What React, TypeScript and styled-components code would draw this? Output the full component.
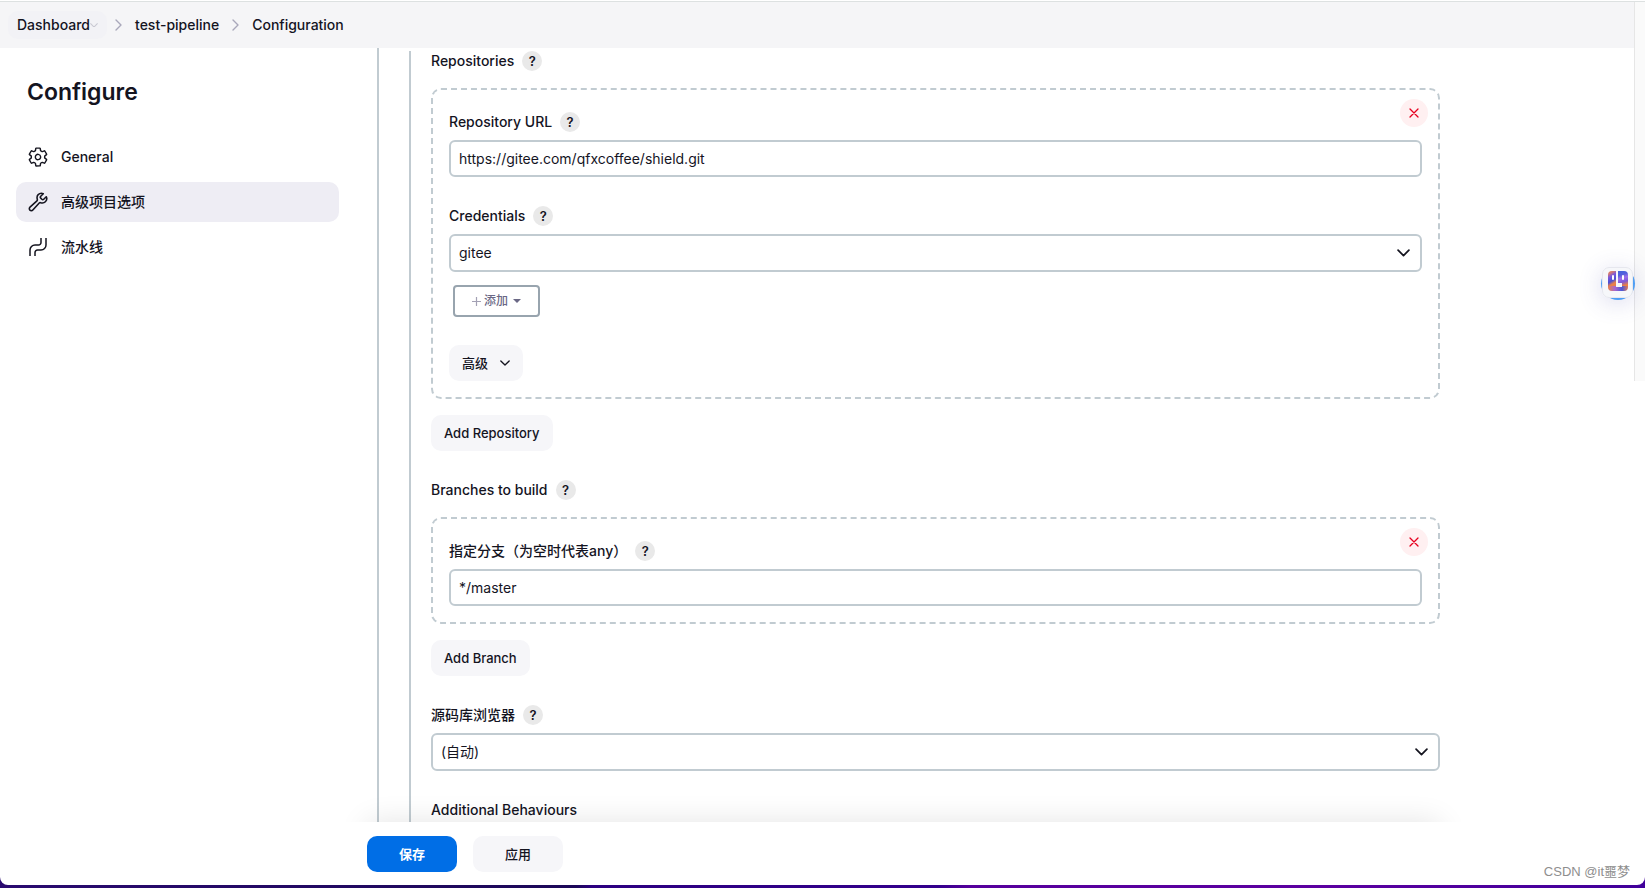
import React from "react";
import styled, { createGlobalStyle } from "styled-components";

const sans = `Inter, "Noto Sans CJK SC", "Liberation Sans", sans-serif`;
const line = "#c1cbd1";
const ink = "#14141f";

const GlobalStyle = createGlobalStyle`
  *, *::before, *::after { box-sizing: border-box; }
  body {
    margin: 0;
    background: linear-gradient(90deg, #2a0a70 0%, #1c0858 35%, #2c0080 36%, #33008c 57%, #56009c 59%, #5c00a0 80%, #40009a 100%);
    color: ${ink};
    font: 500 14px/20px ${sans};
  }
  button, input, select { font: inherit; color: inherit; margin: 0; }
`;

const Page = styled.div`
  position: relative;
  display: flex;
  flex-direction: column;
  height: 100vh;
  padding-bottom: 3px;
`;

const Window = styled.div`
  display: flex;
  flex: 1;
  min-height: 0;
  flex-direction: column;
  overflow: hidden;
  background: #fff;
  border-radius: 0 0 8px 8px;
`;

const Header = styled.header`
  flex: none;
  height: 48px;
  padding: 9px 8px 8px;
  border-top: 1px solid #fff;
  background: #f5f5f7;
  box-shadow: inset 0 1px #dde1e1;
`;

const Crumbs = styled.nav`
  display: flex;
  align-items: center;
  gap: 13px;
  height: 30px;

  svg { flex: none; }
`;

const Crumb = styled.a<{ $pill?: boolean }>`
  display: flex;
  align-items: center;
  height: 28px;
  margin-right: ${(p) => (p.$pill ? "-5px" : "0")};
  padding: ${(p) => (p.$pill ? "0 9px" : "0")};
  border-radius: 10px;
  background: ${(p) => (p.$pill ? "#f2f2f6" : "transparent")};
  color: inherit;
  text-decoration: none;
`;

const Body = styled.div`
  position: relative;
  display: flex;
  flex: 1;
  min-height: 0;
  overflow: hidden;
`;

const Sidebar = styled.aside`
  flex: none;
  width: 377px;
  padding: 30px 38px 0 16px;
`;

const Title = styled.h1`
  margin: 0 0 31px;
  padding-left: 11px;
  font-size: 23px;
  line-height: 28px;
  font-weight: 600;
`;

const NavList = styled.nav`
  display: flex;
  flex-direction: column;
  gap: 5px;
`;

const NavItem = styled.a<{ $active?: boolean }>`
  display: flex;
  align-items: center;
  gap: 13px;
  height: 40px;
  padding: 0 12px;
  border-radius: 10px;
  background: ${(p) => (p.$active ? "#eeedf4" : "transparent")};
  color: inherit;
  text-decoration: none;

  svg { flex: none; }
`;

const Main = styled.main`
  flex: 1;
  min-width: 0;
`;

const Content = styled.div`
  max-width: 1063px;
  border-left: 2px solid ${line};
  padding: 3px 0 0 30px;
`;

const Group = styled.div`
  display: flex;
  flex-direction: column;
  align-items: stretch;
  gap: 29px;
  min-height: 800px;
  padding-left: 20px;
  border-left: 2px solid ${line};
`;

const Stack = styled.section<{ $gap: number }>`
  display: flex;
  flex-direction: column;
  align-items: flex-start;
  gap: ${(p) => p.$gap}px;
`;

const LabelRow = styled.div`
  display: flex;
  align-items: center;
  gap: 8px;
  height: 20px;
`;

const HelpButton = styled.button`
  width: 20px;
  height: 20px;
  padding: 0;
  border: 0;
  border-radius: 50%;
  background: #e9e9e9;
  font-size: 13px;
  line-height: 20px;
  font-weight: 600;
  text-align: center;
`;

const Card = styled.div`
  position: relative;
  display: flex;
  flex-direction: column;
  gap: 29px;
  width: 100%;
  padding: 22px 16px 16px;
  border: 2px dashed ${line};
  border-radius: 10px;
`;

const RepeatBlock = styled.div`
  display: flex;
  flex-direction: column;
  align-items: flex-start;
  gap: 16px;
  width: 100%;
`;

const RemoveButton = styled.button`
  position: absolute;
  top: 9px;
  right: 10px;
  display: grid;
  place-items: center;
  width: 28px;
  height: 28px;
  padding: 0;
  border: 0;
  border-radius: 50%;
  background: #fff0f1;
`;

const TextInput = styled.input`
  width: 100%;
  height: 37px;
  padding: 0 8px;
  border: 2px solid ${line};
  border-radius: 6px;
  background: #fff;
  font-weight: 400;
`;

const SelectWrap = styled.div`
  position: relative;
  width: 100%;

  svg {
    position: absolute;
    top: 15px;
    right: 12px;
    pointer-events: none;
  }
`;

const Select = styled.select`
  display: block;
  width: 100%;
  height: 38px;
  padding: 0 8px;
  border: 2px solid ${line};
  border-radius: 6px;
  background: #fff;
  font-weight: 400;
  appearance: none;
`;

const CredentialActions = styled.div`
  display: flex;
  flex-direction: column;
  align-items: flex-start;
  gap: 28px;
  padding-top: 5px;
`;

const AddButton = styled.button`
  display: flex;
  align-items: center;
  justify-content: center;
  gap: 3px;
  width: 87px;
  height: 32px;
  margin-left: 4px;
  padding: 0;
  border: 2px solid #98a4ae;
  border-radius: 4px;
  background: #fff;
  color: #6a6885;
  font-size: 12px;
`;

const Caret = styled.svg`
  margin-left: 2px;
`;

const Button = styled.button<{ $primary?: boolean; $wide?: boolean }>`
  display: flex;
  align-items: center;
  justify-content: center;
  gap: 12px;
  height: 36px;
  min-width: ${(p) => (p.$wide ? "90px" : "0")};
  padding: 0 13px;
  border: 0;
  border-radius: 10px;
  background: ${(p) => (p.$primary ? "#006ee6" : "#f6f6f9")};
  color: ${(p) => (p.$primary ? "#fff" : ink)};
  font-size: 13px;
  font-weight: ${(p) => (p.$primary ? 700 : 500)};
`;

const BarShadow = styled.div`
  position: absolute;
  left: 367px;
  right: 205px;
  bottom: -63px;
  height: 63px;
  box-shadow: 0 0 30px rgba(0, 0, 0, 0.11);
  pointer-events: none;
`;

const Footer = styled.footer`
  display: flex;
  flex: none;
  align-items: flex-start;
  gap: 16px;
  height: 63px;
  padding: 14px 15px 0 367px;
`;

const Watermark = styled.span`
  align-self: flex-end;
  margin-left: auto;
  padding-bottom: 3px;
  color: #8e8e8e;
  font: 400 13px/20px "Liberation Sans", "Noto Sans CJK SC", sans-serif;
`;

const ScrollTrack = styled.div`
  position: absolute;
  top: 2px;
  right: 0;
  width: 11px;
  height: 379px;
  border-left: 1px solid #e6e6e6;
  background: #fafafa;
`;

const Assistant = styled.button`
  position: absolute;
  top: 267px;
  right: 12px;
  isolation: isolate;
  width: 31px;
  height: 31px;
  padding: 0;
  border: 0;
  border-radius: 7px;
  background: transparent;
  box-shadow: 0 4px 24px rgba(70, 70, 170, 0.2);

  &::before {
    content: "";
    position: absolute;
    z-index: -1;
    inset: 0 -2px -2px -1px;
    border-radius: 50%;
    background: #4f9ff5;
  }
`;

const AssistantFace = styled.span`
  display: flex;
  justify-content: center;
  width: 31px;
  height: 31px;
  padding-top: 3px;
  border: 1px solid #e6e7ee;
  border-radius: 7px;
  background: #f6f7fa;
`;

function Chevron({ size = 12, color = ink, width = 2 }: { size?: number; color?: string; width?: number }) {
  return (
    <svg width={size} height={size * 0.6} viewBox="0 0 12 7" fill="none" aria-hidden="true">
      <path d="M1 1l5 5 5-5" stroke={color} strokeWidth={width} strokeLinecap="round" strokeLinejoin="round" />
    </svg>
  );
}

function Separator() {
  return (
    <svg width="7" height="12" viewBox="0 0 7 12" fill="none" aria-hidden="true">
      <path d="M1 1l5 5-5 5" stroke="#a9a8ba" strokeWidth="1.4" strokeLinecap="round" strokeLinejoin="round" />
    </svg>
  );
}

function GearIcon() {
  return (
    <svg width="20" height="20" viewBox="16 16 480 480" fill="none" stroke={ink} strokeWidth="34" strokeLinejoin="round" strokeLinecap="round" aria-hidden="true">
      <path d="M262.29 192.31a64 64 0 1057.4 57.4 64.13 64.13 0 00-57.4-57.4zM416.39 256a154.34 154.34 0 01-1.53 20.79l45.21 35.46a10.81 10.81 0 012.45 13.75l-42.77 74a10.81 10.81 0 01-13.14 4.59l-44.9-18.08a16.11 16.11 0 00-15.17 1.75A164.48 164.48 0 01325 400.8a15.94 15.94 0 00-8.82 12.14l-6.73 47.89a11.08 11.08 0 01-10.68 9.17h-85.54a11.11 11.11 0 01-10.69-8.87l-6.72-47.82a16.07 16.07 0 00-9-12.22 155.3 155.3 0 01-21.46-12.57 16 16 0 00-15.11-1.71l-44.89 18.07a10.81 10.81 0 01-13.14-4.58l-42.77-74a10.8 10.8 0 012.45-13.75l38.21-30a16.05 16.05 0 006-14.08c-.36-4.17-.58-8.33-.58-12.5s.21-8.27.58-12.35a16 16 0 00-6.07-13.94l-38.19-30A10.81 10.81 0 0149.48 186l42.77-74a10.81 10.81 0 0113.14-4.59l44.9 18.08a16.11 16.11 0 0015.17-1.75A164.48 164.48 0 01187 111.2a15.94 15.94 0 008.82-12.14l6.73-47.89A11.08 11.08 0 01213.23 42h85.54a11.11 11.11 0 0110.69 8.87l6.72 47.82a16.07 16.07 0 009 12.22 155.3 155.3 0 0121.46 12.57 16 16 0 0015.11 1.71l44.89-18.07a10.81 10.81 0 0113.14 4.58l42.77 74a10.8 10.8 0 01-2.45 13.75l-38.21 30a16.05 16.05 0 00-6.05 14.08c.33 4.14.55 8.3.55 12.47z" />
    </svg>
  );
}

function WrenchIcon() {
  return (
    <svg width="20" height="20" viewBox="16 16 480 480" fill="none" stroke={ink} strokeWidth="38" strokeMiterlimit="10" strokeLinecap="round" aria-hidden="true">
      <path d="M393.87 190a32.1 32.1 0 01-45.25 0l-26.57-26.57a32.09 32.09 0 010-45.26L382.19 58a1 1 0 00-.3-1.64c-38.82-16.64-89.15-8.16-121.11 23.57-30.58 30.35-32.32 76-21.12 115.84a31.93 31.93 0 01-9.06 32.08L64 380a48.17 48.17 0 1068 68l153.86-167a31.93 31.93 0 0131.6-9.13c39.54 10.59 84.54 8.6 114.72-21.19 32.49-32 39.5-88.56 23.75-120.93a1 1 0 00-1.6-.26z" />
    </svg>
  );
}

function PipelineIcon() {
  return (
    <svg width="20" height="20" viewBox="0 0 20 20" fill="none" stroke={ink} strokeWidth="1.5" aria-hidden="true">
      <path d="M2 19v-6a5 5 0 0 1 5-5h3.500a2.500 2.500 0 0 0 2.500-2.500V1" />
      <path d="M7 19v-3.500a2.500 2.500 0 0 1 2.500-2.500H13a5 5 0 0 0 5-5V1" />
    </svg>
  );
}

function AssistantLogo() {
  return (
    <svg width="20" height="20" viewBox="0 0 20 20" aria-hidden="true">
      <defs>
        <linearGradient id="faceLeft" x1="0" y1="0" x2="0.300" y2="1">
          <stop offset="0" stopColor="#e8804a" />
          <stop offset="0.200" stopColor="#d07878" />
          <stop offset="0.400" stopColor="#7b58dc" />
          <stop offset="0.700" stopColor="#4a50d4" />
          <stop offset="0.900" stopColor="#e8804a" />
        </linearGradient>
        <linearGradient id="faceRight" x1="0" y1="0" x2="0.200" y2="1">
          <stop offset="0" stopColor="#3f64dc" />
          <stop offset="0.300" stopColor="#5560dc" />
          <stop offset="0.500" stopColor="#a070ea" />
          <stop offset="0.750" stopColor="#7a58d8" />
          <stop offset="1" stopColor="#ee8140" />
        </linearGradient>
        <linearGradient id="faceChin" x1="0" y1="0" x2="1" y2="0">
          <stop offset="0" stopColor="#e8804a" />
          <stop offset="0.350" stopColor="#a868d0" />
          <stop offset="0.700" stopColor="#4a58d8" />
          <stop offset="1" stopColor="#e07850" />
        </linearGradient>
      </defs>
      <path d="M4 0h4v16H0V4a4 4 0 0 1 4-4z" fill="url(#faceLeft)" />
      <path d="M10 0h6a4 4 0 0 1 4 4v12h-6v-4h-4z" fill="url(#faceRight)" />
      <path d="M0 15h8v1h6v-1h6v1a4 4 0 0 1-4 4H4a4 4 0 0 1-4-4z" fill="url(#faceChin)" />
      <rect x="4" y="4" width="2" height="5" rx="1" fill="#fff" />
      <rect x="14" y="4" width="2" height="5" rx="1" fill="#fff" />
    </svg>
  );
}

function FieldLabel({ text, htmlFor, help = true }: { text: string; htmlFor?: string; help?: boolean }) {
  return (
    <LabelRow>
      {htmlFor ? <label htmlFor={htmlFor}>{text}</label> : <span>{text}</span>}
      {help && <HelpButton type="button" aria-label={`Help: ${text}`}>?</HelpButton>}
    </LabelRow>
  );
}

function SelectField({ id, value }: { id: string; value: string }) {
  return (
    <SelectWrap>
      <Select id={id} defaultValue={value}>
        <option value={value}>{value}</option>
      </Select>
      <Chevron size={13} width={1.6} />
    </SelectWrap>
  );
}

function Remove() {
  return (
    <RemoveButton type="button" aria-label="Remove">
      <svg width="10" height="10" viewBox="0 0 10 10" aria-hidden="true">
        <path d="M1 1l8 8M9 1L1 9" stroke="#e6001f" strokeWidth="1.3" strokeLinecap="round" />
      </svg>
    </RemoveButton>
  );
}

export default function App() {
  return (
    <Page>
      <GlobalStyle />
      <Window>
        <Header>
          <Crumbs aria-label="Breadcrumb">
            <Crumb href="#dashboard" $pill>
              Dashboard
              <Chevron size={8} color="#c8c8d2" width={1.6} />
            </Crumb>
            <Separator />
            <Crumb href="#pipeline">test-pipeline</Crumb>
            <Separator />
            <Crumb href="#configuration">Configuration</Crumb>
          </Crumbs>
        </Header>
        <Body>
          <Sidebar>
            <Title>Configure</Title>
            <NavList aria-label="Sections">
              <NavItem href="#general"><GearIcon />General</NavItem>
              <NavItem href="#advanced" $active><WrenchIcon />高级项目选项</NavItem>
              <NavItem href="#flow"><PipelineIcon />流水线</NavItem>
            </NavList>
          </Sidebar>
          <Main>
            <Content>
              <Group>
                <Stack $gap={17}>
                  <FieldLabel text="Repositories" />
                  <RepeatBlock>
                    <Card>
                      <Remove />
                      <Stack $gap={8}>
                        <FieldLabel text="Repository URL" htmlFor="url" />
                        <TextInput id="url" type="text" defaultValue="https://gitee.com/qfxcoffee/shield.git" />
                      </Stack>
                      <Stack $gap={8}>
                        <FieldLabel text="Credentials" htmlFor="credentials" />
                        <SelectField id="credentials" value="gitee" />
                        <CredentialActions>
                          <AddButton type="button">
                            <svg width="9" height="9" viewBox="0 0 9 9" aria-hidden="true">
                              <path d="M4.500 0v9M0 4.500h9" stroke="#a3a1b4" strokeWidth="1.2" />
                            </svg>
                            添加
                            <Caret width="8" height="4" viewBox="0 0 8 4" aria-hidden="true">
                              <path d="M0 0h8L4 4z" fill="#6a6885" />
                            </Caret>
                          </AddButton>
                          <Button type="button">
                            高级
                            <Chevron size={10} width={1.6} />
                          </Button>
                        </CredentialActions>
                      </Stack>
                    </Card>
                    <Button type="button">Add Repository</Button>
                  </RepeatBlock>
                </Stack>
                <Stack $gap={17}>
                  <FieldLabel text="Branches to build" />
                  <RepeatBlock>
                    <Card>
                      <Remove />
                      <Stack $gap={8}>
                        <FieldLabel text="指定分支（为空时代表any）" htmlFor="branch" />
                        <TextInput id="branch" type="text" defaultValue="*/master" />
                      </Stack>
                    </Card>
                    <Button type="button">Add Branch</Button>
                  </RepeatBlock>
                </Stack>
                <Stack $gap={8}>
                  <FieldLabel text="源码库浏览器" htmlFor="browser" />
                  <SelectField id="browser" value="(自动)" />
                </Stack>
                <FieldLabel text="Additional Behaviours" help={false} />
              </Group>
            </Content>
          </Main>
          <BarShadow />
        </Body>
        <Footer>
          <Button type="button" $primary $wide>保存</Button>
          <Button type="button" $wide>应用</Button>
          <Watermark>CSDN @it噩梦</Watermark>
        </Footer>
      </Window>
      <ScrollTrack />
      <Assistant type="button" aria-label="Assistant">
        <AssistantFace><AssistantLogo /></AssistantFace>
      </Assistant>
    </Page>
  );
}
